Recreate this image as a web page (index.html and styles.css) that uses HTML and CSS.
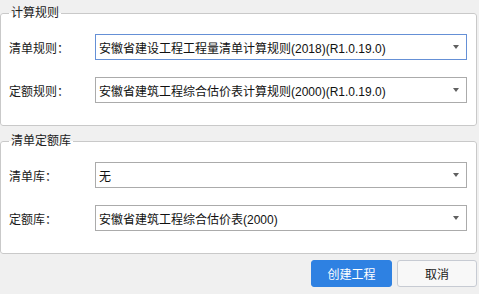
FILE: index.html
```html
<!DOCTYPE html>
<html lang="zh-CN">
<head>
<meta charset="utf-8">
<title>新建工程</title>
<link rel="stylesheet" href="styles.css">
</head>
<body>
<div class="dialog">
  <fieldset class="group">
    <legend class="legend">计算规则</legend>
    <div class="rows">
      <div class="row">
        <span class="label">清单规则：</span>
        <div class="combo focused"><span class="value">安徽省建设工程工程量清单计算规则(2018)(R1.0.19.0)</span><span class="arrow"></span></div>
      </div>
      <div class="row">
        <span class="label">定额规则：</span>
        <div class="combo"><span class="value">安徽省建筑工程综合估价表计算规则(2000)(R1.0.19.0)</span><span class="arrow"></span></div>
      </div>
    </div>
  </fieldset>
  <fieldset class="group group-second">
    <legend class="legend">清单定额库</legend>
    <div class="rows">
      <div class="row">
        <span class="label">清单库：</span>
        <div class="combo"><span class="value">无</span><span class="arrow"></span></div>
      </div>
      <div class="row">
        <span class="label">定额库：</span>
        <div class="combo"><span class="value">安徽省建筑工程综合估价表(2000)</span><span class="arrow"></span></div>
      </div>
    </div>
  </fieldset>
  <div class="actions">
    <button class="btn btn-primary" type="button">创建工程</button>
    <button class="btn btn-default" type="button">取消</button>
  </div>
</div>
</body>
</html>
```
FILE: styles.css
```css
html, body {
  margin: 0;
  padding: 0;
  background: #f0f0f0;
}
body {
  font-family: "Liberation Sans", "Noto Sans CJK SC", sans-serif;
  font-size: 12px;
  color: #1a1a1a;
  width: 479px;
  height: 294px;
  overflow: hidden;
}
.dialog {
  padding-top: 5px;
  width: 477px;
}
.group {
  margin: 0;
  padding: 13px 9px 22px 8px;
  border: 1px solid #c9c9c9;
  border-radius: 3px;
  background: #ffffff;
  min-width: 0;
}
.group-second {
  margin-top: 7px;
}
.legend {
  margin-left: 0;
  padding: 0 2px;
  font-size: 12px;
  line-height: 16px;
  height: 16px;
  color: #222;
  background: linear-gradient(#f0f0f0 0 8px, #ffffff 8px);
}
.rows {
  display: flex;
  flex-direction: column;
  gap: 17px;
}
.row {
  display: grid;
  grid-template-columns: 86px 1fr;
  align-items: center;
}
.label {
  font-size: 12px;
  color: #1a1a1a;
  white-space: nowrap;
}
.combo {
  height: 24px;
  border: 1px solid #ababab;
  background: #fff;
  display: flex;
  align-items: center;
  padding: 0 7px 0 3px;
  box-sizing: content-box;
}
.combo.focused {
  border-color: #6590d6;
}
.value {
  flex: 1;
  white-space: nowrap;
  overflow: hidden;
  font-size: 12px;
  color: #111;
}
.arrow {
  width: 0;
  height: 0;
  border-left: 3.5px solid transparent;
  border-right: 3.5px solid transparent;
  border-top: 4px solid #606060;
}
.actions {
  display: flex;
  justify-content: flex-end;
  gap: 5px;
  margin-top: 6px;
}
.btn {
  height: 27px;
  border-radius: 3px;
  font-family: inherit;
  font-size: 12px;
  padding: 0;
  cursor: default;
}
.btn-primary {
  width: 81px;
  background: #2e81e2;
  border: 1px solid #2e81e2;
  color: #ffffff;
}
.btn-default {
  width: 80px;
  background: #f8f8f8;
  border: 1px solid #c7cbd3;
  color: #1a1a1a;
}
```
